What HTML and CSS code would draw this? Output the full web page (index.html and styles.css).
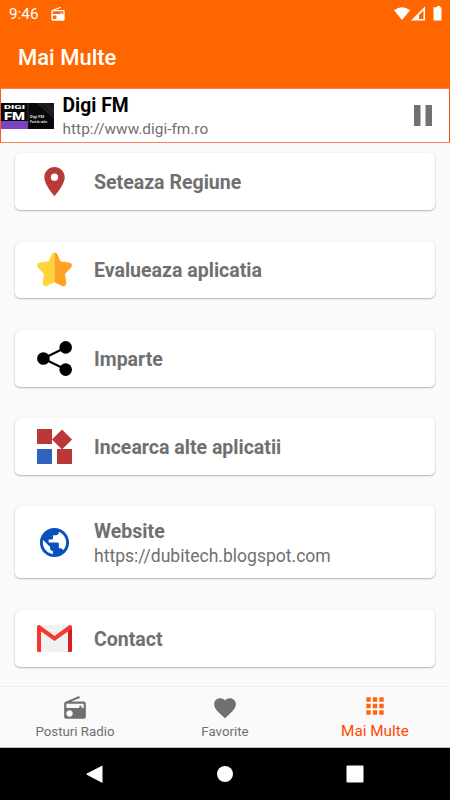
FILE: index.html
```html
<!DOCTYPE html>
<html lang="ro">
<head>
  <meta charset="UTF-8">
  <title>Mai Multe</title>
  <link rel="stylesheet" href="styles.css">
</head>
<body>
  <header class="header">
    <div class="status">
      <span class="time">9:46</span>
      <svg class="status-radio" viewBox="0 0 24 24"><path fill-rule="evenodd" d="M3.24 6.15C2.51 6.43 2 7.17 2 8v12c0 1.1.89 2 2 2h16c1.11 0 2-.9 2-2V8c0-1.11-.89-2-2-2H8.3l8.26-3.34L15.88 1 3.24 6.15zM7 20c-1.66 0-3-1.34-3-3s1.34-3 3-3 3 1.34 3 3-1.34 3-3 3zm13-8h-2v-2h-2v2H4V8h16v4z"/></svg>
      <svg class="status-icons" viewBox="0 0 50 16">
        <path d="M2 4.300Q10 -2 18 4.300L10 14z"/>
        <path fill-rule="evenodd" d="M33 .5V14.500H19zM31.500 4.500l-4.500 4.500v4h4.500z"/>
        <path d="M43 1.200h2V0h3v1.200h1.500V14.500h-8V1.200z"/>
      </svg>
    </div>
    <h1>Mai Multe</h1>
  </header>

  <section class="player">
    <svg class="station-logo" viewBox="0 0 53 26">
      <rect width="53" height="26" fill="#08070a"/>
      <path d="M36 0h17v15z" fill="#1c1a20"/>
      <path d="M36 0L53 15M43 0l10 9" stroke="#3a3840" stroke-width=".6"/>
      <rect y="18" width="27" height="8" fill="#7c45bd"/>
      <path d="M27 0v26" stroke="#444" stroke-width=".7"/>
      <text class="logo-digi" x="3" y="5.500" textLength="21" lengthAdjust="spacingAndGlyphs">DIGI</text>
      <text class="logo-fm" x="3" y="16.500" textLength="21" lengthAdjust="spacingAndGlyphs">FM</text>
      <text class="logo-small" x="29" y="15" textLength="14" lengthAdjust="spacingAndGlyphs">Digi FM</text>
      <text class="logo-small" x="29" y="20" textLength="17" lengthAdjust="spacingAndGlyphs">Post de radio</text>
    </svg>
    <div class="station">
      <div class="station-name">Digi FM</div>
      <div class="station-url">http://www.digi-fm.ro</div>
    </div>
    <svg class="pause" viewBox="0 0 18 21"><path d="M0 0h6.500v21H0zM11.500 0H18v21h-6.500z"/></svg>
  </section>

  <main class="list">
    <div class="card">
      <svg viewBox="0 0 24 24"><path fill="#b93838" fill-rule="evenodd" d="M12 2C8.130 2 5 5.130 5 9c0 5.250 7 13 7 13s7-7.750 7-13c0-3.870-3.130-7-7-7zm0 9.500a2.500 2.500 0 0 1 0-5 2.500 2.500 0 0 1 0 5z"/></svg>
      <div class="label">Seteaza Regiune</div>
    </div>
    <div class="card">
      <svg viewBox="0 0 35 35">
        <path fill="#ffd43b" d="M17.500.5c-1.200 0-2.200.7-2.800 1.900l-3.400 7-8.300 1.200C.2 11-.9 13.800 1 15.800l6 6.100-1.300 8.600c-.4 2.800 2 4.700 4.400 3.500l7.400-3.800z"/>
        <path fill="#ffa124" d="M17.500.5c1.200 0 2.200.7 2.800 1.900l3.400 7 8.300 1.200c2.800.4 3.900 3.200 2 5.200l-6 6.100 1.300 8.600c.4 2.800-2 4.700-4.400 3.500l-7.400-3.800z"/>
      </svg>
      <div class="label">Evalueaza aplicatia</div>
    </div>
    <div class="card">
      <svg viewBox="0 0 35 35">
        <path d="M28.700 6.500L6.300 17.500l22.400 11" fill="none" stroke="#000" stroke-width="2.200"/>
        <circle cx="6.400" cy="17.500" r="6.300"/><circle cx="28.700" cy="6.400" r="6.300"/><circle cx="28.700" cy="28.600" r="6.300"/>
      </svg>
      <div class="label">Imparte</div>
    </div>
    <div class="card">
      <svg viewBox="0 0 35 35">
        <path fill="#b93838" d="M0 0h15v15H0zM20 20h15v15H20zM25 .5l10 10-10 10-10-10z"/>
        <path fill="#3162bd" d="M0 20h15v15H0z"/>
      </svg>
      <div class="label">Incearca alte aplicatii</div>
    </div>
    <div class="card card-tall">
      <svg viewBox="0 0 24 24"><path fill="#0a50bc" d="M12 2C6.480 2 2 6.480 2 12s4.480 10 10 10 10-4.480 10-10S17.520 2 12 2zm-1 17.930c-3.950-.49-7-3.850-7-7.930 0-.62.080-1.210.21-1.790L9 15v1c0 1.100.9 2 2 2v1.930zm6.900-2.540c-.26-.81-1-1.390-1.900-1.390h-1v-3c0-.55-.45-1-1-1H8v-2h2c.55 0 1-.45 1-1V7h2c1.100 0 2-.9 2-2v-.41c2.930 1.190 5 4.060 5 7.410 0 2.080-.8 3.970-2.100 5.390z"/></svg>
      <div>
        <div class="label">Website</div>
        <div class="sub">https://dubitech.blogspot.com</div>
      </div>
    </div>
    <div class="card">
      <svg viewBox="0 0 35 35">
        <path fill="#f1f1f1" d="M1 4h33v27H1z"/>
        <path fill="#f5352e" d="M0 6v23.500Q0 31 1.500 31H4V9z"/>
        <path fill="#d3201f" d="M35 6v23.500q0 1.500-1.500 1.500H31V9z"/>
        <path fill="#f23a32" d="M0 6c0-2 1.800-2.600 3.200-1.600L17.500 15 31.800 4.400C33.200 3.400 35 4 35 6c0 1-.5 1.900-1.300 2.500L17.500 20 1.300 8.500C.5 7.900 0 7 0 6z"/>
      </svg>
      <div class="label">Contact</div>
    </div>
  </main>

  <nav class="tabs">
    <div class="tab">
      <svg viewBox="0 0 24 24"><path fill-rule="evenodd" d="M3.240 6.150C2.510 6.430 2 7.170 2 8v12c0 1.100.89 2 2 2h16c1.110 0 2-.9 2-2V8c0-1.110-.89-2-2-2H8.300l8.260-3.340L15.880 1 3.240 6.150zM7 20c-1.660 0-3-1.340-3-3s1.340-3 3-3 3 1.340 3 3-1.340 3-3 3zm13-8h-2v-2h-2v2H4V8h16v4z"/></svg>
      <span>Posturi Radio</span>
    </div>
    <div class="tab">
      <svg viewBox="0 0 24 24"><path d="M12 21.350l-1.450-1.320C5.400 15.360 2 12.280 2 8.500 2 5.420 4.420 3 7.500 3c1.740 0 3.410.81 4.500 2.090C13.090 3.810 14.760 3 16.500 3 19.580 3 22 5.420 22 8.500c0 3.780-3.400 6.860-8.550 11.540L12 21.350z"/></svg>
      <span>Favorite</span>
    </div>
    <div class="tab active">
      <svg viewBox="0 0 24 24"><path d="M4 8h4V4H4zm6 12h4v-4h-4zm-6 0h4v-4H4zm0-6h4v-4H4zm6 0h4v-4h-4zm6-10v4h4V4zm-6 4h4V4h-4zm6 6h4v-4h-4zm0 6h4v-4h-4z"/></svg>
      <span>Mai Multe</span>
    </div>
  </nav>

  <footer class="system">
    <svg viewBox="0 0 18 18"><path d="M16.500.5v17.500L.8 9.700Q0 9 .8 8.500z"/></svg>
    <svg viewBox="0 0 18 18"><circle cx="9" cy="9" r="8"/></svg>
    <svg viewBox="0 0 18 18"><rect x=".5" y=".5" width="17" height="17" rx="1"/></svg>
  </footer>
</body>
</html>
```
FILE: styles.css
```css
* {
  box-sizing: border-box;
}
body {
  margin: 0;
  width: 450px;
  height: 800px;
  display: flex;
  flex-direction: column;
  overflow: hidden;
  font-family: Roboto, sans-serif;
  background-color: #fafafa;
  color: #707070;
}
svg {
  display: block;
  flex: none;
}
.header {
  height: 88px;
  background-color: #ff6600;
  color: #fff;
}
.status {
  display: flex;
  align-items: center;
  height: 27px;
  padding: 0 8px 0 9px;
}
.status svg {
  fill: #fff;
}
.time {
  width: 41px;
  font-size: 15.3px;
}
.status-radio {
  width: 16px;
  height: 16px;
}
.status-icons {
  width: 50px;
  height: 16px;
  margin-left: auto;
}
h1 {
  margin: 0;
  padding-left: 18px;
  font-size: 22px;
  line-height: 62px;
  font-weight: 500;
}
.player {
  display: flex;
  align-items: center;
  height: 55px;
  border: 1px solid #fb7f63;
  border-left-color: #ff5a1a;
  border-right-color: #ff4a10;
  background-color: #fff;
}
.station-logo {
  width: 53px;
  height: 26px;
}
.logo-digi,
.logo-fm {
  fill: #fff;
  font-weight: 900;
  font-size: 5.5px;
}
.logo-fm {
  font-size: 10px;
}
.logo-small {
  fill: #ddd;
  font-size: 3.7px;
  font-weight: 700;
}
.station {
  flex: 1;
  padding: 1px 0 0 8.6px;
}
.station-name {
  font-size: 19.3px;
  line-height: 25px;
  font-weight: 700;
  color: #000;
}
.station-url {
  font-size: 15.4px;
  line-height: 22px;
}
.pause {
  width: 18px;
  height: 21px;
  margin-right: 17.5px;
  fill: #717171;
}
.list {
  flex: 1;
  display: flex;
  flex-direction: column;
  gap: 31.5px;
  padding: 10.3px 15px 0;
}
.card {
  display: flex;
  align-items: center;
  gap: 22px;
  height: 56.8px;
  flex: none;
  padding-left: 22px;
  border-radius: 5px;
  background-color: #fff;
  box-shadow: 0 1px 2px rgba(0, 0, 0, 0.28), 0 0 1px rgba(0, 0, 0, 0.12);
}
.card-tall {
  height: 72px;
}
.card svg {
  width: 35px;
  height: 35px;
}
.label {
  padding-top: 2px;
  font-size: 19.55px;
  line-height: 25px;
  font-weight: 700;
}
.card-tall .label {
  padding-top: 4px;
}
.sub {
  font-size: 17.55px;
  line-height: 25px;
}
.tabs {
  display: flex;
  height: 62px;
  border-top: 1px solid #ededed;
  border-bottom: 1px solid #bbb;
}
.tab {
  flex: 1;
  display: flex;
  flex-direction: column;
  align-items: center;
  padding-top: 8px;
  font-size: 13.3px;
  line-height: 22px;
}
.tab svg {
  width: 26px;
  height: 26px;
  fill: #707070;
}
.tab.active {
  padding-top: 6px;
  font-size: 15.3px;
  line-height: 25px;
  color: #ff4a00;
}
.tab.active svg {
  fill: #ff6410;
}
.system {
  display: flex;
  align-items: center;
  justify-content: center;
  gap: 112px;
  height: 52px;
  background-color: #000;
}
.system svg {
  width: 18px;
  height: 18px;
  fill: #fff;
}
```
